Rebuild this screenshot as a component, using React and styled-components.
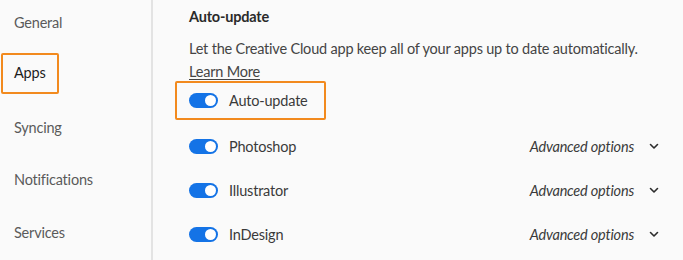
import styled, { createGlobalStyle } from "styled-components";

const GlobalStyle = createGlobalStyle`
  html, body {
    margin: 0;
    padding: 0;
    background: #fafafa;
  }
  body {
    font-family: "Lato", "Noto Sans", sans-serif;
    color: #2c2c2c;
    letter-spacing: -0.2px;
  }
`;

const navItems = ["General", "Apps", "Syncing", "Notifications", "Services"];
const apps = ["Photoshop", "Illustrator", "InDesign"];

function Toggle() {
  return (
    <Switch>
      <Knob />
    </Switch>
  );
}

function Chevron() {
  return (
    <svg width="10" height="7" viewBox="0 0 10 7">
      <path
        d="M1.5 1.5 L5 5 L8.5 1.5"
        fill="none"
        stroke="#2c2c2c"
        strokeWidth="1.6"
        strokeLinecap="round"
        strokeLinejoin="round"
      />
    </svg>
  );
}

export default function App() {
  return (
    <>
      <GlobalStyle />
      <Page>
        <Sidebar>
          {navItems.map((item) => (
            <NavLabel key={item} active={item === "Apps"}>
              {item}
            </NavLabel>
          ))}
        </Sidebar>

        <Content>
          <Heading>Auto-update</Heading>
          <Description>
            Let the Creative Cloud app keep all of your apps up to date
            automatically.
          </Description>
          <LearnMore href="#">Learn More</LearnMore>

          <MasterRow>
            <Toggle />
            <AppName>Auto-update</AppName>
          </MasterRow>

          <AppList>
            {apps.map((app) => (
              <AppRow key={app}>
                <Toggle />
                <AppName>{app}</AppName>
                <Advanced>
                  <span>Advanced options</span>
                  <Chevron />
                </Advanced>
              </AppRow>
            ))}
          </AppList>
        </Content>
      </Page>
    </>
  );
}

const Page = styled.div`
  display: flex;
  width: 683px;
  height: 260px;
  overflow: hidden;
  background: #fafafa;
`;

const Sidebar = styled.nav`
  width: 151px;
  flex-shrink: 0;
  border-right: 2px solid #e3e3e3;
  display: flex;
  flex-direction: column;
  align-items: flex-start;
  gap: 34.5px;
  padding-top: 13.5px;
`;

const NavLabel = styled.div`
  font-size: 14.5px;
  line-height: 18px;
  color: ${({ active }) => (active ? "#1e1e1e" : "#5a5a5a")};
  padding: ${({ active }) => (active ? "9px 11px 10px 11px" : "0 0 0 14px")};
  margin: ${({ active }) => (active ? "-13px 0 -10px 1px" : "0")};
  border: ${({ active }) => (active ? "2px solid #f28a1e" : "none")};
  border-radius: 2px;
`;

const Content = styled.main`
  flex: 1;
  padding: 6px 0 0 36px;
  display: flex;
  flex-direction: column;
`;

const Heading = styled.h2`
  margin: 0;
  font-size: 14.5px;
  font-weight: 700;
  color: #2a2a2a;
  line-height: 22px;
`;

const Description = styled.p`
  margin: 10px 0 0;
  font-size: 14.5px;
  color: #444;
  line-height: 22px;
`;

const LearnMore = styled.a`
  align-self: flex-start;
  margin-top: 1px;
  font-size: 14.5px;
  color: #444;
  line-height: 22px;
  text-decoration: underline;
  text-underline-offset: 2px;
`;

const MasterRow = styled.div`
  align-self: flex-start;
  display: flex;
  align-items: center;
  gap: 11px;
  margin: -2px 0 0 -14px;
  padding: 0 16px 0 12px;
  height: 35px;
  border: 2px solid #f28a1e;
  border-radius: 2px;
`;

const AppList = styled.div`
  display: flex;
  flex-direction: column;
  margin-top: 4px;
`;

const AppRow = styled.div`
  display: flex;
  align-items: center;
  gap: 11px;
  height: 44px;
  padding-right: 24px;
`;

const Switch = styled.div`
  width: 29px;
  height: 15px;
  border-radius: 8px;
  background: #1473e6;
  display: flex;
  align-items: center;
  justify-content: flex-end;
  padding: 0 2px;
  box-sizing: border-box;
  flex-shrink: 0;
`;

const Knob = styled.div`
  width: 11px;
  height: 11px;
  border-radius: 50%;
  background: #fff;
`;

const AppName = styled.span`
  font-size: 14.5px;
  color: #3a3a3a;
`;

const Advanced = styled.div`
  margin-left: auto;
  display: flex;
  align-items: center;
  gap: 15px;
  font-size: 14.5px;
  font-style: italic;
  color: #3a3a3a;
`;
